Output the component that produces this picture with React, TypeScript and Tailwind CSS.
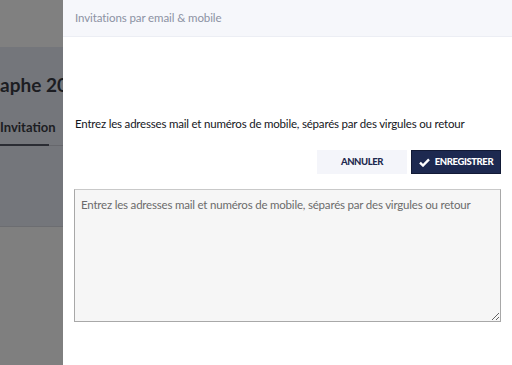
import React from "react";

const CheckIcon = () => (
  <svg width="11" height="9" viewBox="0 0 11 9" fill="none">
    <path d="M1 4.6 L4 7.5 L10 1.3" stroke="white" strokeWidth="2.4" />
  </svg>
);

const Backdrop = () => (
  <div className="w-[63px] shrink-0 overflow-hidden flex flex-col">
    <div className="h-[47px] bg-[#808080]" />
    <div className="h-[179px] bg-[#74767b] flex flex-col">
      <div className="mt-[25px] text-[19px] font-bold text-[#1c1d22] whitespace-nowrap leading-[26px]">
        aphe 2024
      </div>
      <div className="mt-[21px] text-[13px] font-bold text-[#1c1d22] whitespace-nowrap leading-[16px]">
        Invitation
      </div>
      <div className="mt-[9px] flex items-end">
        <div className="w-[49px] h-[2px] bg-[#2a2c33]" />
        <div className="flex-1 h-px bg-[#66676c]" />
      </div>
    </div>
    <div className="h-px bg-[#6c6d71]" />
    <div className="flex-1 bg-[#7f7f7f]" />
  </div>
);

export default function App() {
  const text =
    "Entrez les adresses mail et numéros de mobile, séparés par des virgules ou retour";

  return (
    <div
      className="flex w-[512px] h-[365px] overflow-hidden bg-white"
      style={{ fontFamily: "Lato, 'Noto Sans', sans-serif" }}
    >
      <Backdrop />
      <div className="flex-1 flex flex-col bg-white">
        <div className="h-[37px] bg-[#f6f7fb] border-b border-[#eceef4] px-3 flex items-center text-[11.5px] tracking-[-0.1px] text-[#8c92a3]">
          Invitations par email &amp; mobile
        </div>
        <div className="px-[11px] pt-[79px] flex flex-col">
          <p className="pl-px text-[11.5px] tracking-[-0.2px] leading-[16px] text-[#14161c]">{text}</p>
          <div className="mt-[18px] flex justify-end gap-1">
            <button className="w-[90px] h-[24px] bg-[#f4f5fa] text-[9.5px] font-black text-[#1f2a4f] tracking-[-0.4px]">
              ANNULER
            </button>
            <button className="w-[90px] h-[24px] bg-[#1d2950] border border-[#121a36] text-[9.5px] font-black text-white tracking-[-0.4px] flex items-center justify-center gap-[5px]">
              <CheckIcon />
              ENREGISTRER
            </button>
          </div>
          <textarea
            className="mt-[15px] h-[133px] w-full resize-y bg-[#f6f6f6] border border-[#a8a8a8] border-t-[#c9c9c9] px-[6px] py-[7px] text-[11.5px] tracking-[-0.2px] leading-[16px] text-[#333] placeholder:text-[#6b6b6b] outline-none"
            placeholder={text}
          />
        </div>
      </div>
    </div>
  );
}
